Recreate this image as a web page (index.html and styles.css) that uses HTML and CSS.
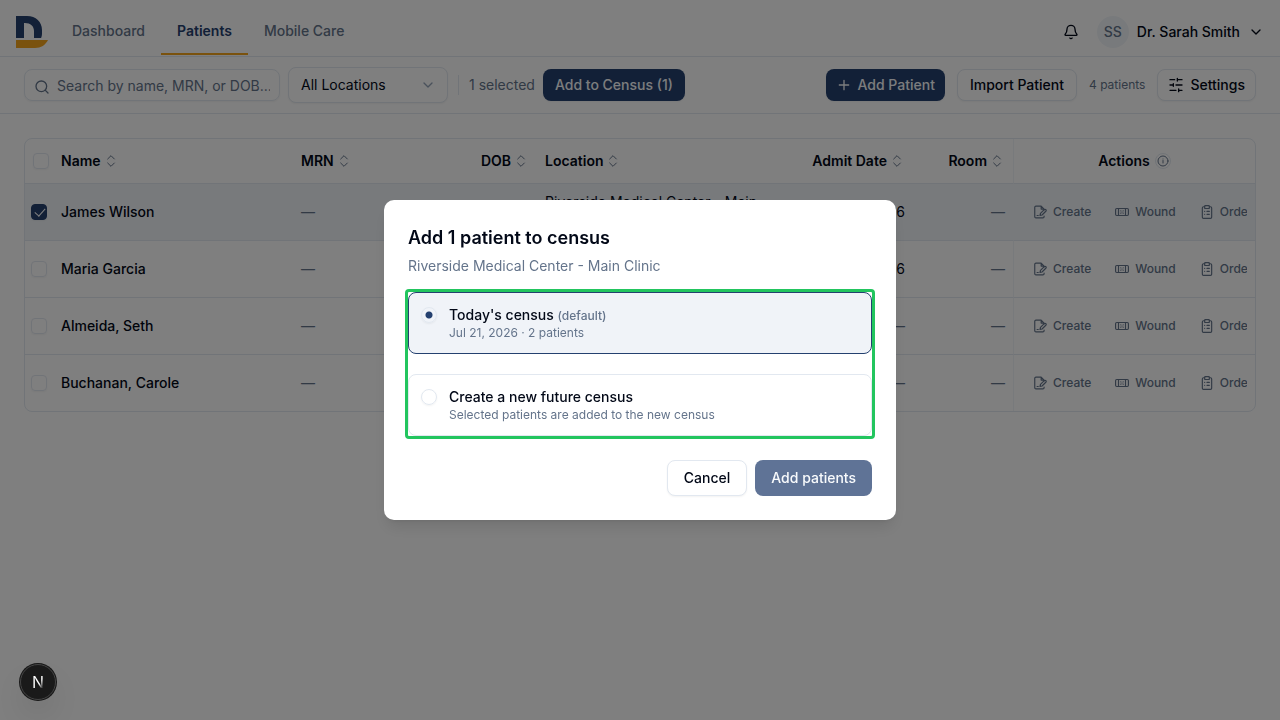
FILE: index.html
```html
<!DOCTYPE html>
<html lang="en">
<head>
    <meta charset="UTF-8">
    <meta name="viewport" content="width=device-width, initial-scale=1">
    <title>Patients</title>
    <link rel="stylesheet" href="styles.css">
</head>
<body>

<!-- Icon set -->
<svg class="sprite" aria-hidden="true">
    <symbol id="i-bell" viewBox="0 0 24 24"><path d="M10.3 21a1.94 1.94 0 0 0 3.4 0M3.3 15.3A1 1 0 0 0 4 17h16a1 1 0 0 0 .7-1.7C19.4 14 18 12.5 18 8A6 6 0 0 0 6 8c0 4.500-1.400 6-2.700 7.300"/></symbol>
    <symbol id="i-down" viewBox="0 0 24 24"><path d="m6 9 6 6 6-6"/></symbol>
    <symbol id="i-search" viewBox="0 0 24 24"><circle cx="11" cy="11" r="8"/><path d="m21 21-4.300-4.300"/></symbol>
    <symbol id="i-plus" viewBox="0 0 24 24"><path d="M5 12h14M12 5v14"/></symbol>
    <symbol id="i-sliders" viewBox="0 0 24 24"><path d="M21 4h-7M10 4H3M21 12h-9M8 12H3M21 20h-5M12 20H3M14 2v4M8 10v4M16 18v4"/></symbol>
    <symbol id="i-sort" viewBox="0 0 24 24"><path d="m7 15 5 5 5-5M7 9l5-5 5 5"/></symbol>
    <symbol id="i-info" viewBox="0 0 24 24"><circle cx="12" cy="12" r="10"/><path d="M12 16v-5M12 8h.01"/></symbol>
    <symbol id="i-note" viewBox="0 0 24 24"><path d="M19 9V7l-5-5H5a2 2 0 0 0-2 2v16a2 2 0 0 0 2 2h12a2 2 0 0 0 2-2v-1M14 2v5h5M7 18h2M12 18l.8-3.500 6.500-6.500a1.800 1.800 0 0 1 2.700 2.700L15.500 17.200z"/></symbol>
    <symbol id="i-bandage" viewBox="0 0 24 24"><rect x="1" y="6" width="22" height="12" rx="2"/><path d="M6 6v12M18 6v12M10 10h.01M14 10h.01M10 14h.01M14 14h.01M12 12h.01"/></symbol>
    <symbol id="i-clipboard" viewBox="0 0 24 24"><rect x="8" y="1" width="8" height="5" rx="1"/><path d="M16 3h2a2 2 0 0 1 2 2v16a2 2 0 0 1-2 2H6a2 2 0 0 1-2-2V5a2 2 0 0 1 2-2h2M12 11h4M12 16h4M8 11h.01M8 16h.01"/></symbol>
</svg>

<header class="topbar">
    <a class="logo" href="#" aria-label="Home">
        <svg viewBox="0 0 32 32" width="32" height="32">
            <path fill="#24406f" d="M0 0h11c9 0 15 6 15 14v4c0 1.500-.4 2.700-.9 4H18v-7c0-5-3.500-8-9-8H8v15H0z"/>
            <path fill="#f5a51c" d="M0 24h32c-2.500 5-7 8-13 8H0z"/>
        </svg>
    </a>
    <nav class="nav">
        <a href="#">Dashboard</a>
        <a href="#" class="active">Patients</a>
        <a href="#">Mobile Care</a>
    </nav>
    <button class="bell" type="button" aria-label="Notifications"><svg class="icon"><use href="#i-bell"/></svg></button>
    <button class="user" type="button">
        <span class="avatar">SS</span>
        <span>Dr. Sarah Smith</span>
        <svg class="icon"><use href="#i-down"/></svg>
    </button>
</header>

<div class="toolbar">
    <div class="search">
        <svg class="icon"><use href="#i-search"/></svg>
        <input type="text" placeholder="Search by name, MRN, or DOB..." aria-label="Search patients">
    </div>
    <div class="select">
        <select aria-label="Location">
            <option>All Locations</option>
        </select>
        <svg class="icon"><use href="#i-down"/></svg>
    </div>
    <span class="divider"></span>
    <span class="selected-count">1 selected</span>
    <button class="btn small primary" type="button">Add to Census (1)</button>
    <div class="toolbar-right">
        <button class="btn small primary with-icon" type="button"><svg class="icon"><use href="#i-plus"/></svg>Add Patient</button>
        <button class="btn small" type="button">Import Patient</button>
        <span class="total">4 patients</span>
        <button class="btn small with-icon" type="button"><svg class="icon"><use href="#i-sliders"/></svg>Settings</button>
    </div>
</div>

<main class="content">
    <div class="table-wrap">
        <table>
            <colgroup>
                <col class="col-check">
                <col class="col-name">
                <col class="col-mrn">
                <col class="col-dob">
                <col>
                <col class="col-admit">
                <col class="col-room">
                <col class="col-actions">
            </colgroup>
            <thead>
                <tr>
                    <th class="check"><input type="checkbox" aria-label="Select all"></th>
                    <th><span class="head">Name <svg class="icon sort"><use href="#i-sort"/></svg></span></th>
                    <th><span class="head">MRN <svg class="icon sort"><use href="#i-sort"/></svg></span></th>
                    <th class="right"><span class="head">DOB <svg class="icon sort"><use href="#i-sort"/></svg></span></th>
                    <th><span class="head">Location <svg class="icon sort"><use href="#i-sort"/></svg></span></th>
                    <th class="right"><span class="head">Admit Date <svg class="icon sort"><use href="#i-sort"/></svg></span></th>
                    <th class="right"><span class="head">Room <svg class="icon sort"><use href="#i-sort"/></svg></span></th>
                    <th class="actions-cell"><span class="head">Actions <span class="info"><svg class="icon"><use href="#i-info"/></svg></span></span></th>
                </tr>
            </thead>
            <tbody>
                <tr class="selected">
                    <td class="check"><input type="checkbox" checked aria-label="Select James Wilson"></td>
                    <td class="name">James Wilson</td>
                    <td class="empty">—</td>
                    <td class="right empty">—</td>
                    <td>Riverside Medical Center - Main Clinic</td>
                    <td class="right">Jul 21, 2026</td>
                    <td class="right empty">—</td>
                    <td class="actions-cell"><div class="actions">
                        <button type="button"><svg class="icon"><use href="#i-note"/></svg>Create</button>
                        <button type="button"><svg class="icon"><use href="#i-bandage"/></svg>Wound</button>
                        <button type="button"><svg class="icon"><use href="#i-clipboard"/></svg>Orders</button>
                    </div></td>
                </tr>
                <tr>
                    <td class="check"><input type="checkbox" aria-label="Select Maria Garcia"></td>
                    <td class="name">Maria Garcia</td>
                    <td class="empty">—</td>
                    <td class="right empty">—</td>
                    <td>Riverside Medical Center - Main Clinic</td>
                    <td class="right">Jul 21, 2026</td>
                    <td class="right empty">—</td>
                    <td class="actions-cell"><div class="actions">
                        <button type="button"><svg class="icon"><use href="#i-note"/></svg>Create</button>
                        <button type="button"><svg class="icon"><use href="#i-bandage"/></svg>Wound</button>
                        <button type="button"><svg class="icon"><use href="#i-clipboard"/></svg>Orders</button>
                    </div></td>
                </tr>
                <tr>
                    <td class="check"><input type="checkbox" aria-label="Select Almeida, Seth"></td>
                    <td class="name">Almeida, Seth</td>
                    <td class="empty">—</td>
                    <td class="right empty">—</td>
                    <td>Riverside Medical Center - Main Clinic</td>
                    <td class="right empty">—</td>
                    <td class="right empty">—</td>
                    <td class="actions-cell"><div class="actions">
                        <button type="button"><svg class="icon"><use href="#i-note"/></svg>Create</button>
                        <button type="button"><svg class="icon"><use href="#i-bandage"/></svg>Wound</button>
                        <button type="button"><svg class="icon"><use href="#i-clipboard"/></svg>Orders</button>
                    </div></td>
                </tr>
                <tr>
                    <td class="check"><input type="checkbox" aria-label="Select Buchanan, Carole"></td>
                    <td class="name">Buchanan, Carole</td>
                    <td class="empty">—</td>
                    <td class="right empty">—</td>
                    <td>Riverside Medical Center - Main Clinic</td>
                    <td class="right empty">—</td>
                    <td class="right empty">—</td>
                    <td class="actions-cell"><div class="actions">
                        <button type="button"><svg class="icon"><use href="#i-note"/></svg>Create</button>
                        <button type="button"><svg class="icon"><use href="#i-bandage"/></svg>Wound</button>
                        <button type="button"><svg class="icon"><use href="#i-clipboard"/></svg>Orders</button>
                    </div></td>
                </tr>
            </tbody>
        </table>
    </div>
</main>

<!-- Add to census dialog -->
<div class="overlay">
    <form class="dialog" role="dialog" aria-modal="true" aria-labelledby="dialog-title">
        <h2 id="dialog-title">Add 1 patient to census</h2>
        <p class="dialog-text">Riverside Medical Center - Main Clinic</p>
        <div class="options">
            <label class="option checked" for="census-today">
                <input type="radio" id="census-today" name="census" checked>
                <span>
                    <span class="option-title">Today's census <small>(default)</small></span>
                    <span class="option-text">Jul 21, 2026 · 2 patients</span>
                </span>
            </label>
            <label class="option" for="census-new">
                <input type="radio" id="census-new" name="census">
                <span>
                    <span class="option-title">Create a new future census</span>
                    <span class="option-text">Selected patients are added to the new census</span>
                </span>
            </label>
        </div>
        <div class="dialog-footer">
            <button class="btn" type="button">Cancel</button>
            <button class="btn primary" type="submit" disabled>Add patients</button>
        </div>
    </form>
</div>

<button class="dev-badge" type="button" aria-label="Open dev tools"><span>N</span></button>

</body>
</html>
```

FILE: styles.css
```css
* {
    box-sizing: border-box;
}
body {
    margin: 0;
    font-family: Inter, "Liberation Sans", sans-serif;
    font-size: 14px;
    line-height: 20px;
    color: #020817;
    background-color: #fff;
}
button, input, select {
    font: inherit;
    color: inherit;
}
button {
    padding: 0;
    border: none;
    background: none;
    cursor: pointer;
}
.sprite {
    display: none;
}
.icon {
    width: 16px;
    height: 16px;
    flex-shrink: 0;
    fill: none;
    stroke: currentColor;
    stroke-width: 2;
    stroke-linecap: round;
    stroke-linejoin: round;
}

/* Header */
.topbar {
    display: flex;
    align-items: center;
    padding: 8px 16px 0;
    border-bottom: 1px solid #e2e8f0;
}
.logo {
    display: flex;
    margin-right: 8px;
}
.nav {
    display: flex;
    height: 48px;
    align-items: flex-start;
    margin-right: auto;
}
.nav a {
    padding: 13px 16px 12px;
    border-bottom: 2px solid transparent;
    color: #64748b;
    font-weight: 500;
    text-decoration: none;
}
.nav .active {
    color: #24406f;
    border-color: #f5a51c;
    font-weight: 600;
}
.bell {
    display: flex;
    padding: 10px;
    margin-right: 8px;
}
.user {
    display: flex;
    align-items: center;
    gap: 8px;
    font-weight: 500;
}
.avatar {
    width: 32px;
    height: 32px;
    line-height: 32px;
    border-radius: 50%;
    background-color: #f1f5f9;
    color: #64748b;
}

/* Toolbar */
.toolbar {
    display: flex;
    align-items: center;
    gap: 8px;
    padding: 10px 24px;
    border-bottom: 1px solid #e2e8f0;
}
.search {
    display: flex;
    align-items: center;
    gap: 7px;
    width: 256px;
    height: 32px;
    padding: 0 9px;
    border: 1px solid #e2e8f0;
    border-radius: 8px;
    box-shadow: 0 1px 2px rgba(0,0,0,0.05);
    color: #64748b;
}
.search .icon {
    margin-top: 3px;
}
.search input {
    flex: 1;
    min-width: 0;
    padding: 2px 0 0;
    border: none;
    outline: none;
    background: none;
}
.search input::placeholder {
    color: #64748b;
}
.select {
    position: relative;
    width: 160px;
}
.select select {
    display: block;
    width: 100%;
    height: 36px;
    padding: 0 12px;
    border: 1px solid #e2e8f0;
    border-radius: 8px;
    box-shadow: 0 1px 2px rgba(0,0,0,0.05);
    background-color: #fff;
    appearance: none;
}
.select .icon {
    position: absolute;
    right: 12px;
    top: 10px;
    color: #94a3b8;
    pointer-events: none;
}
.divider {
    width: 1px;
    height: 20px;
    margin: 0 2px;
    background-color: #e2e8f0;
}
.selected-count {
    color: #64748b;
}
.toolbar-right {
    display: flex;
    align-items: center;
    gap: 12px;
    margin-left: auto;
}
.total {
    color: #64748b;
    font-size: 12px;
}
.btn {
    display: flex;
    align-items: center;
    gap: 6px;
    height: 36px;
    padding: 0 16px;
    border: 1px solid #e2e8f0;
    border-radius: 8px;
    box-shadow: 0 1px 2px rgba(0,0,0,0.05);
    background-color: #fff;
    font-weight: 500;
    white-space: nowrap;
}
.btn.small {
    height: 32px;
    padding: 0 12px;
}
.btn.primary {
    border: none;
    background-color: #24406f;
    color: #f8fafc;
}
.btn.small.with-icon {
    padding: 0 10px;
}
.btn:disabled {
    background-color: #5f7396;
    box-shadow: none;
}

/* Table */
.content {
    padding: 24px;
}
.table-wrap {
    border: 1px solid #e2e8f0;
    border-radius: 8px;
    overflow: hidden;
}
table {
    width: 100%;
    table-layout: fixed;
    border-collapse: separate;
    border-spacing: 0;
}
.col-check {
    width: 28px;
}
.col-name {
    width: 240px;
}
.col-mrn {
    width: 120px;
}
.col-dob {
    width: 124px;
}
.col-admit {
    width: 136px;
}
.col-room {
    width: 100px;
}
.col-actions {
    width: 242px;
}
th, td {
    padding: 8px;
    border-bottom: 1px solid #e2e8f0;
    text-align: left;
}
th {
    padding: 12px 8px;
    font-weight: 600;
}
tbody tr:last-child td {
    border-bottom: none;
}
.selected td {
    background-color: #f1f5f9;
}
.right {
    text-align: right;
}
.head {
    display: inline-flex;
    align-items: center;
    gap: 2px;
    vertical-align: top;
}
.sort {
    color: #64748b;
    stroke-width: 1.5;
}
.name {
    font-weight: 500;
}
.empty {
    color: #64748b;
}
th.check {
    padding: 12px 0 12px 8px;
}
td.check {
    padding: 8px 0 8px 6px;
}
input[type="checkbox"] {
    display: block;
    position: relative;
    width: 16px;
    height: 16px;
    margin: 0;
    border: 1px solid #e2e8f0;
    border-radius: 4px;
    box-shadow: 0 1px 2px rgba(0,0,0,0.05);
    appearance: none;
}
input[type="checkbox"]:checked {
    border-color: #24406f;
    background-color: #24406f;
}
input[type="checkbox"]:checked::after {
    content: "";
    position: absolute;
    left: 5px;
    top: 1px;
    width: 5px;
    height: 9px;
    border: solid #fff;
    border-width: 0 1px 1px 0;
    transform: rotate(42deg);
}
.actions-cell {
    border-left: 1px solid #f1f5f9;
}
th.actions-cell {
    text-align: center;
}
.info {
    display: flex;
    margin-left: 3px;
    padding: 1px;
    border: 1px solid #e2e8f0;
    border-radius: 50%;
    color: #64748b;
}
.info .icon {
    width: 12px;
    height: 12px;
}
.actions {
    display: flex;
    gap: 8px;
    padding-left: 3px;
    overflow: hidden;
}
.actions button {
    display: flex;
    flex-shrink: 0;
    align-items: center;
    gap: 6px;
    padding: 4px 8px;
    color: #64748b;
    font-size: 12px;
    font-weight: 500;
    line-height: 16px;
}
.actions .icon {
    width: 14px;
    height: 14px;
}

/* Dialog */
.overlay {
    position: fixed;
    inset: 0;
    display: flex;
    align-items: center;
    justify-content: center;
    background-color: rgba(0,0,0,0.5);
}
.dialog {
    width: 100%;
    max-width: 512px;
    padding: 24px;
    border-radius: 10px;
    background-color: #fff;
    box-shadow: 0 10px 15px -3px rgba(0,0,0,0.1), 0 4px 6px -4px rgba(0,0,0,0.1);
}
.dialog h2 {
    margin: 0;
    font-size: 18px;
    line-height: 28px;
    font-weight: 600;
}
.dialog-text {
    margin: 4px 0 16px;
    color: #64748b;
}
.options {
    display: grid;
    gap: 20px;
    outline: 3px solid #22c55e;
    border-radius: 1px;
}
.option {
    display: flex;
    gap: 12px;
    padding: 12px;
    border: 1px solid #e2e8f0;
    border-radius: 8px;
}
.option.checked {
    border-color: #24406f;
    background-color: #f0f3f8;
}
.option input {
    flex-shrink: 0;
    width: 16px;
    height: 16px;
    margin: 2px 0;
    border: 1px solid #e2e8f0;
    border-radius: 50%;
    box-shadow: 0 1px 2px rgba(0,0,0,0.05);
    appearance: none;
}
.option input:checked {
    background: radial-gradient(circle, #24406f 3px, transparent 4px);
}
.option-title, .option-text {
    display: block;
}
.option-title {
    font-weight: 500;
}
.option small {
    color: #64748b;
    font-size: 12px;
    line-height: 16px;
}
.option-text {
    color: #64748b;
    font-size: 12px;
    line-height: 16px;
}
.dialog-footer {
    display: flex;
    justify-content: flex-end;
    gap: 8px;
    margin-top: 24px;
}

.dev-badge {
    position: fixed;
    left: 20px;
    bottom: 20px;
    width: 36px;
    height: 36px;
    border: 1px solid #454545;
    border-radius: 50%;
    background-color: #1a1a1a;
    box-shadow: 0 0 0 1px #171717, 0 16px 32px -8px rgba(0,0,0,0.24);
    font-size: 16px;
}
.dev-badge span {
    background: linear-gradient(to bottom right, #fff 60%, #444 80%);
    background-clip: text;
    color: transparent;
}
```
